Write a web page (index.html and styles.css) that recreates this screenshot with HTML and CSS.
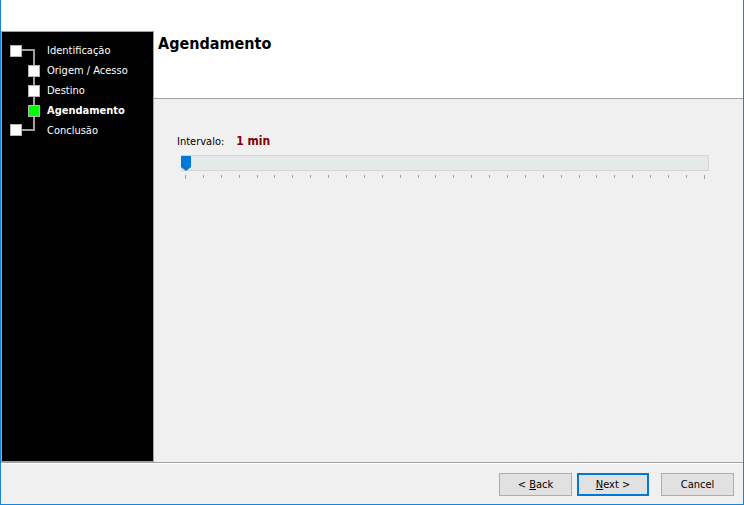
FILE: index.html
```html
<!DOCTYPE html>
<html>
<head>
<meta charset="utf-8">
<link rel="stylesheet" href="styles.css">
</head>
<body>
<div class="window">
  <div class="main">
    <div class="side">
      <div class="panel">
        <div class="tree">
          <svg class="tree-lines" width="40" height="110" viewBox="0 0 40 110">
            <rect x="20" y="17" width="13" height="2" fill="#a0a0a0"/>
            <rect x="31" y="17" width="2" height="82" fill="#a0a0a0"/>
            <rect x="20" y="97" width="13" height="2" fill="#a0a0a0"/>
            <rect x="8.5" y="13.5" width="11" height="11" fill="#fff" stroke="#b4b4b4"/>
            <rect x="26.5" y="33.5" width="11" height="11" fill="#fff" stroke="#b4b4b4"/>
            <rect x="26.5" y="53.5" width="11" height="11" fill="#fff" stroke="#b4b4b4"/>
            <rect x="26.5" y="73.5" width="11" height="11" fill="#00ff00" stroke="#b4b4b4"/>
            <rect x="8.5" y="92.5" width="11" height="11" fill="#fff" stroke="#b4b4b4"/>
          </svg>
          <ul class="steps">
            <li>Identificação</li>
            <li>Origem / Acesso</li>
            <li>Destino</li>
            <li class="current">Agendamento</li>
            <li>Conclusão</li>
          </ul>
        </div>
      </div>
    </div>
    <div class="content">
      <div class="header">
        <h1 class="title">Agendamento</h1>
      </div>
      <div class="body">
        <div class="interval">
          <span class="label">Intervalo:</span>
          <span class="value">1 min</span>
        </div>
        <div class="slider">
          <div class="track">
            <svg class="thumb" width="11" height="16" viewBox="0 0 11 16">
              <path d="M0 0 H10 V11 L5 15 L0 11 Z" fill="#0078d7"/>
            </svg>
          </div>
          <div class="ticks">
            <i class="tick end"></i><i class="tick"></i><i class="tick"></i><i class="tick"></i><i class="tick"></i>
            <i class="tick"></i><i class="tick"></i><i class="tick"></i><i class="tick"></i><i class="tick"></i>
            <i class="tick"></i><i class="tick"></i><i class="tick"></i><i class="tick"></i><i class="tick"></i>
            <i class="tick"></i><i class="tick"></i><i class="tick"></i><i class="tick"></i><i class="tick"></i>
            <i class="tick"></i><i class="tick"></i><i class="tick"></i><i class="tick"></i><i class="tick"></i>
            <i class="tick"></i><i class="tick"></i><i class="tick"></i><i class="tick"></i><i class="tick end"></i>
          </div>
        </div>
      </div>
    </div>
  </div>
  <div class="footer">
    <button class="btn">&lt; <u>B</u>ack</button>
    <button class="btn default"><u>N</u>ext &gt;</button>
    <button class="btn cancel">Cancel</button>
  </div>
</div>
</body>
</html>
```

FILE: styles.css
```css
* { box-sizing: border-box; }
html, body { margin: 0; padding: 0; }
body {
  width: 744px;
  height: 505px;
  overflow: hidden;
  font-family: "DejaVu Sans Condensed", "DejaVu Sans", sans-serif;
  font-size: 11px;
  color: #000;
}
.window {
  width: 744px;
  height: 505px;
  border-left: 1px solid #1883d7;
  border-right: 1px solid #1883d7;
  border-bottom: 1px solid #1883d7;
  background: #f0f0f0;
  display: flex;
  flex-direction: column;
}
.main {
  height: 462px;
  display: flex;
}
.side {
  width: 153px;
  background: #fff;
  padding-top: 31px;
  display: flex;
}
.panel {
  flex: 1;
  background: #000;
  border: 1px solid #a0a0a0;
}
.tree {
  display: flex;
}
.tree-lines { display: block; flex: none; }
.steps {
  list-style: none;
  margin: 0;
  padding: 9px 0 0 5px;
  color: #fff;
}
.steps li {
  height: 20px;
  line-height: 20px;
  white-space: nowrap;
}
.steps li.current { font-weight: bold; }
.content {
  flex: 1;
  display: flex;
  flex-direction: column;
}
.header {
  height: 99px;
  background: #fff;
  border-bottom: 1px solid #a0a0a0;
  padding: 34px 0 0 4px;
}
.title {
  margin: 0;
  font-size: 16px;
  line-height: 20px;
  font-weight: bold;
}
.body {
  flex: 1;
  padding: 35px 34px 0 27px;
}
.interval {
  display: flex;
  align-items: baseline;
  height: 18px;
  margin-left: -4px;
}
.label { font-size: 11px; }
.value {
  margin-left: 12px;
  font-size: 12px;
  font-weight: bold;
  color: #800000;
}
.slider {
  margin-top: 3px;
}
.track {
  position: relative;
  height: 16px;
  background: #e6e9e9;
  border: 1px solid #d4d4d4;
}
.thumb {
  position: absolute;
  left: -1px;
  top: 0px;
}
.ticks {
  display: flex;
  justify-content: space-between;
  margin: 4px 4px 0 4px;
  height: 5px;
  align-items: flex-start;
}
.tick {
  display: block;
  width: 1px;
  height: 3px;
  background: #a0a0a0;
}
.tick.end { height: 4px; }
.footer {
  flex: 1;
  border-top: 1px solid #a0a0a0;
  box-shadow: inset 0 1px 0 #fff;
  display: flex;
  justify-content: flex-end;
  align-items: flex-start;
  padding: 10px 9px 0 0;
}
.btn {
  width: 73px;
  height: 23px;
  margin-left: 5px;
  background: #e1e1e1;
  border: 1px solid #adadad;
  font-family: "DejaVu Sans Condensed", "DejaVu Sans", sans-serif;
  font-size: 11px;
  color: #000;
  padding: 0;
}
.btn.default {
  width: 72px;
  border: 2px solid #0078d7;
}
.btn.cancel { margin-left: 12px; }
```
